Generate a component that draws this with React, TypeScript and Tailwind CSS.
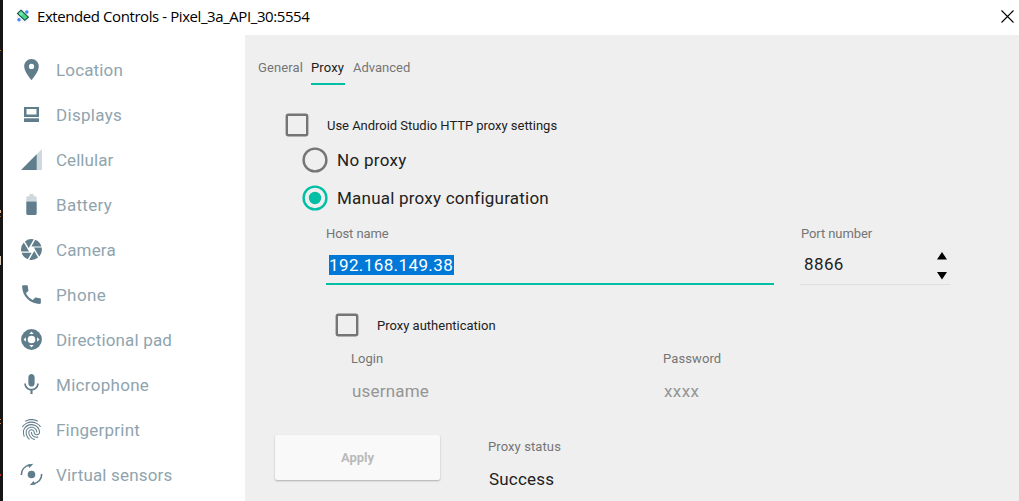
import React from "react";
import { MdPlace, MdCamera, MdPhone, MdMic, MdFingerprint } from "react-icons/md";

function DisplaysIcon() {
  return (
    <svg className="size-[25px]" viewBox="0 0 25 25" fill="none">
      <path d="M5 5h15v10H5zM7.500 7v5.600h10V7z" fill="#607d8b" fillRule="evenodd" />
      <path d="M5 16.300h15V20H5z" fill="#607d8b" />
    </svg>
  );
}

function CellularIcon() {
  return (
    <svg className="size-[25px]" viewBox="0 0 24 24">
      <path d="M2 22h20V2z" fill="#607d8b" fillOpacity=".3" />
      <path d="M17 7L2 22h15z" fill="#607d8b" />
    </svg>
  );
}

function BatteryIcon() {
  return (
    <svg className="size-[25px]" viewBox="0 0 24 24">
      <path d="M17 5.33C17 4.6 16.4 4 15.67 4H14V2h-4v2H8.33C7.6 4 7 4.6 7 5.33V9h10V5.33z" fill="#607d8b" fillOpacity=".3" />
      <path d="M7 9v11.67C7 21.4 7.6 22 8.33 22h7.33c.74 0 1.34-.6 1.34-1.33V9H7z" fill="#607d8b" />
    </svg>
  );
}

function DpadIcon() {
  return (
    <svg className="size-[25px]" viewBox="0 0 25 25">
      <circle cx="12.5" cy="12.5" r="10.4" fill="#607d8b" />
      <circle cx="12.5" cy="12.5" r="3.8" fill="#fff" />
      <path d="M10.3 6.900L12.5 4.500l2.200 2.400zM10.3 18.100l2.200 2.400 2.200-2.400zM6.900 10.3l-2.400 2.200 2.400 2.200zM18.100 10.3l2.400 2.200-2.400 2.200z" fill="#fff" />
    </svg>
  );
}

function SensorsIcon() {
  return (
    <svg className="size-[25px]" viewBox="0 0 25 25">
      <circle cx="12.5" cy="12.5" r="3.8" fill="#607d8b" />
      <path d="M2.300 13C2.300 8 5.500 4 11 3" fill="none" stroke="#607d8b" strokeWidth="1.6" />
      <path d="M8.500 2.600L14.300 1.800L10.500 6z" fill="#607d8b" />
      <path d="M22.700 12C22.700 17 19.500 21 14 22" fill="none" stroke="#607d8b" strokeWidth="1.6" />
      <path d="M16.500 22.400L10.700 23.200L14.500 19z" fill="#607d8b" />
    </svg>
  );
}

const items = [
  { label: "Location", icon: <MdPlace size={25} />, cls: "tracking-[0.15px]" },
  { label: "Displays", icon: <DisplaysIcon />, cls: "tracking-[0.3px]" },
  { label: "Cellular", icon: <CellularIcon />, cls: "tracking-[0.05px]" },
  { label: "Battery", icon: <BatteryIcon />, cls: "tracking-[0.3px]" },
  { label: "Camera", icon: <MdCamera size={25} />, cls: "tracking-[0.15px]" },
  { label: "Phone", icon: <MdPhone size={25} />, cls: "tracking-[0.4px]" },
  { label: "Directional pad", icon: <DpadIcon />, cls: "tracking-[0.17px]" },
  { label: "Microphone", icon: <MdMic size={25} />, cls: "tracking-[0.3px]" },
  { label: "Fingerprint", icon: <MdFingerprint size={25} />, cls: "tracking-[0.22px]" },
  { label: "Virtual sensors", icon: <SensorsIcon />, cls: "tracking-[0.17px]" },
];

function Checkbox() {
  return (
    <svg className="size-6 shrink-0" viewBox="0 0 24 24" fill="none">
      <rect x="1.800" y="1.800" width="20.400" height="20.400" rx="1.500" stroke="#757575" strokeWidth="2.400" />
    </svg>
  );
}

function Radio({ checked = false }: { checked?: boolean }) {
  return (
    <svg className="size-[26px] shrink-0" viewBox="0 0 26 26" fill="none">
      <circle cx="13" cy="13" r="11.400" stroke={checked ? "#00bfa5" : "#757575"} strokeWidth="2.400" />
      {checked && <circle cx="13" cy="13" r="6.200" fill="#00bfa5" />}
    </svg>
  );
}

function TitleBar() {
  return (
    <header className="flex h-[35px] shrink-0 items-center bg-white pl-[13px]">
      <svg className="mb-1 size-[14px] shrink-0" viewBox="0 0 14 14">
        <circle cx="7" cy="7.500" r="6.500" fill="#f3f5fb" />
        <circle cx="10.800" cy="3" r="1.700" fill="#4285f4" />
        <circle cx="3" cy="10.800" r="1.700" fill="#4285f4" />
        <path d="M5 1.200L12.400 8.200L8.800 11.300L1.500 4.400z" fill="#3ddc84" stroke="#174d49" strokeWidth="1.100" />
        <path d="M5 2.500L7.500 5L5 7L2.700 4.500z" fill="#78e5ad" />
      </svg>
      <h1 className="mb-[3px] ml-[7px] whitespace-nowrap font-['Open_Sans',sans-serif] text-[15px] leading-5 tracking-[-0.42px] text-black">
        Extended Controls - Pixel_3a_API_30:5554
      </h1>
      <svg className="mb-[2px] ml-auto mr-[5px] size-[13px]" viewBox="0 0 13 13">
        <path d="M.5 .5l12 12M12.500 .5l-12 12" stroke="#000" strokeWidth="1.100" />
      </svg>
    </header>
  );
}

export default function App() {
  return (
    <div className="flex h-[501px] w-[1019px] overflow-hidden bg-white font-[Roboto,sans-serif]">
      <div className="flex w-[3px] shrink-0 flex-col bg-[#151515]">
        <i className="mt-[50px] h-px w-px bg-[#b87820]" />
        <i className="mt-[159px] h-[3px] w-px bg-[#ddb28c]" />
        <i className="mt-[3px] h-px w-px bg-[#a85c16]" />
        <i className="mt-[39px] h-[9px] w-px bg-[#d8c8b6]" />
        <i className="mt-[154px] h-px w-px bg-[#d17d38]" />
        <i className="mt-[3px] h-px w-px bg-[#d17d38]" />
        <i className="mt-[50px] h-[2px] w-px bg-[#c42c25]" />
      </div>
      <div className="flex min-w-0 flex-1 flex-col">
        <TitleBar />
        <div className="flex min-h-0 flex-1">
          <nav className="w-[242px] shrink-0 bg-white pt-3">
            {items.map((it) => (
              <div key={it.label} className="flex h-[45px] items-center pl-4 text-[#607d8b]">
                {it.icon}
                <span className={"ml-3 whitespace-nowrap text-[17px] leading-5 text-[#90a4ae] " + it.cls}>{it.label}</span>
              </div>
            ))}
          </nav>
          <main className="flex min-w-0 flex-1 flex-col bg-[#efefef]">
            <div className="ml-[13px] mt-[23px] flex h-[27px] gap-2 whitespace-nowrap text-[13px] leading-5 text-[#757575]">
              <span className="w-[45px] tracking-[0.12px]">General</span>
              <span className="w-[34px] border-b-2 border-[#00bfa5] tracking-[0.15px] text-[#212121]">Proxy</span>
              <span>Advanced</span>
            </div>
            <label className="ml-10 mt-7 flex h-6 items-center">
              <Checkbox />
              <span className="ml-[18px] mt-px text-[13px] leading-5 tracking-[-0.03px] text-[#212121]">Use Android Studio HTTP proxy settings</span>
            </label>
            <label className="ml-[57px] mt-[10px] flex h-[26px] items-center">
              <Radio />
              <span className="ml-[9px] text-[17px] leading-5 tracking-[0.3px] text-[#212121]">No proxy</span>
            </label>
            <label className="ml-[57px] mt-3 flex h-[26px] items-center">
              <Radio checked />
              <span className="ml-[9px] text-[17px] leading-5 tracking-[0.22px] text-[#212121]">Manual proxy configuration</span>
            </label>
            <div className="ml-[81px] mt-[13px] flex">
              <div className="h-[61px] w-[448px] border-b-2 border-[#00bfa5]">
                <div className="text-[13px] leading-5 tracking-[-0.1px] text-[#757575]">Host name</div>
                <div className="ml-[3px] mt-[11px] flex">
                  <span className="h-5 w-[125px] whitespace-nowrap bg-[#0078d7] text-[17px] leading-5 tracking-[0.4px] text-white">192.168.149.38</span>
                </div>
              </div>
              <div className="ml-[26px] h-[61px] w-[150px] border-b border-[#dedede]">
                <div className="pl-px text-[13px] leading-5 tracking-[-0.1px] text-[#757575]">Port number</div>
                <div className="flex justify-between pl-1 pr-[3px] pt-2">
                  <span className="mt-[2px] text-[17px] leading-5 tracking-[0.4px] text-[#212121]">8866</span>
                  <svg className="h-7 w-2.5" viewBox="0 0 10 28">
                    <path d="M5 0l5 7.500H0zM0 20h10l-5 7.500z" fill="#000" />
                  </svg>
                </div>
              </div>
            </div>
            <label className="ml-[90px] mt-7 flex h-6 items-center">
              <Checkbox />
              <span className="ml-[18px] mt-px text-[13px] leading-5 text-[#212121]">Proxy authentication</span>
            </label>
            <div className="ml-[106px] mt-3 flex">
              <div className="w-[312px]">
                <div className="text-[13px] leading-5 text-[#757575]">Login</div>
                <div className="ml-px mt-3 text-[17px] leading-5 tracking-[0.2px] text-[#959595]">username</div>
              </div>
              <div>
                <div className="text-[13px] leading-5 tracking-[0.1px] text-[#757575]">Password</div>
                <div className="ml-px mt-3 text-[17px] leading-5 tracking-[0.4px] text-[#959595]">xxxx</div>
              </div>
            </div>
            <div className="ml-[30px] mt-[34px] flex">
              <button className="h-[45px] w-[165px] rounded-[2px] bg-[#f9f9f9] text-[13px] font-bold leading-5 text-[#bababa] shadow-[0_1px_2px_rgba(0,0,0,0.28)]">
                Apply
              </button>
              <div className="ml-12">
                <div className="mt-[2px] text-[13px] leading-5 tracking-[0.1px] text-[#757575]">Proxy status</div>
                <div className="ml-px mt-3 text-[17px] leading-5 tracking-[0.2px] text-[#212121]">Success</div>
              </div>
            </div>
          </main>
        </div>
      </div>
    </div>
  );
}
